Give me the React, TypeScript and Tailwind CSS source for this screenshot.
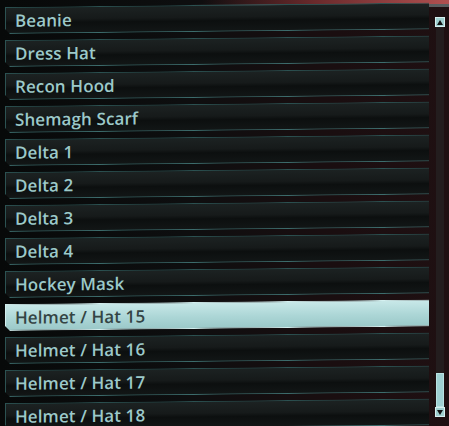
import React from 'react';

const ITEMS = [
  'Beanie',
  'Dress Hat',
  'Recon Hood',
  'Shemagh Scarf',
  'Delta 1',
  'Delta 2',
  'Delta 3',
  'Delta 4',
  'Hockey Mask',
  'Helmet / Hat 15',
  'Helmet / Hat 16',
  'Helmet / Hat 17',
  'Helmet / Hat 18',
];

const SELECTED = 'Helmet / Hat 15';

function Row({ label, active }: { label: string; active: boolean }) {
  return (
    <li
      className={
        active
          ? 'h-[27px] shrink-0 flex items-center pl-[9px] border border-r-0 border-[#d4f0f0] [clip-path:polygon(0_0,100%_0,100%_100%,5px_100%,0_calc(100%-5px))] bg-[linear-gradient(180deg,#c8e8e8_0%,#acd6d6_55%,#9bc9c9_100%)] text-[#344444]'
          : 'h-[27px] shrink-0 flex items-center pl-[9px] border border-r-0 border-[#2c5252] border-b-[#3d6d6d] [clip-path:polygon(0_0,100%_0,100%_100%,5px_100%,0_calc(100%-5px))] bg-[linear-gradient(180deg,#1c2222_0%,#161a1a_45%,#0c0f0f_60%,#121616_100%)] text-[#9cc9c9]'
      }
    >
      <span className="text-[17px] leading-none font-semibold tracking-[0.1px]">{label}</span>
    </li>
  );
}

export default function App() {
  return (
    <div
      className="w-[449px] h-[426px] overflow-hidden relative bg-[linear-gradient(90deg,#070909_0%,#0d0e0f_40%,#1a0e10_75%,#1f1012_100%)]"
      style={{ fontFamily: '"Open Sans", "Noto Sans", sans-serif' }}
    >
      {/* top frame edge */}
      <div className="absolute left-0 right-0 top-0 h-[4px] bg-[linear-gradient(90deg,transparent_0%,transparent_45%,#6a2a2c_70%,#b05050_100%)]" />
      <div className="absolute left-[190px] right-0 top-[4px] h-[3px] bg-[linear-gradient(90deg,transparent,#4a4e50_30%,#5a5e60_100%)]" />

      <div className="flex h-full pt-[7px]">
        {/* list */}
        <ul className="flex flex-col gap-[6px] w-[429px] pl-[5px] -skew-y-[0.6deg] origin-top-left">
          {ITEMS.map((it) => (
            <Row key={it} label={it} active={it === SELECTED} />
          ))}
        </ul>

        {/* scrollbar */}
        <div className="ml-[6px] mt-[10px] w-[10px] h-[400px] flex flex-col">
          <div className="h-[10px] w-[10px] bg-[#9fcfcf] border border-[#d6f0f0] flex items-center justify-center">
            <div className="w-0 h-0 border-l-[3px] border-r-[3px] border-b-[5px] border-l-transparent border-r-transparent border-b-[#101414]" />
          </div>
          <div className="flex-1 mx-[1px] bg-[#231d1e] flex flex-col justify-end">
            <div className="h-[34px] bg-[#9fd0d2] border border-[#b9e2e2]" />
          </div>
          <div className="h-[10px] w-[10px] bg-[#9fcfcf] border border-[#d6f0f0] flex items-center justify-center">
            <div className="w-0 h-0 border-l-[3px] border-r-[3px] border-t-[5px] border-l-transparent border-r-transparent border-t-[#101414]" />
          </div>
        </div>
      </div>
    </div>
  );
}
